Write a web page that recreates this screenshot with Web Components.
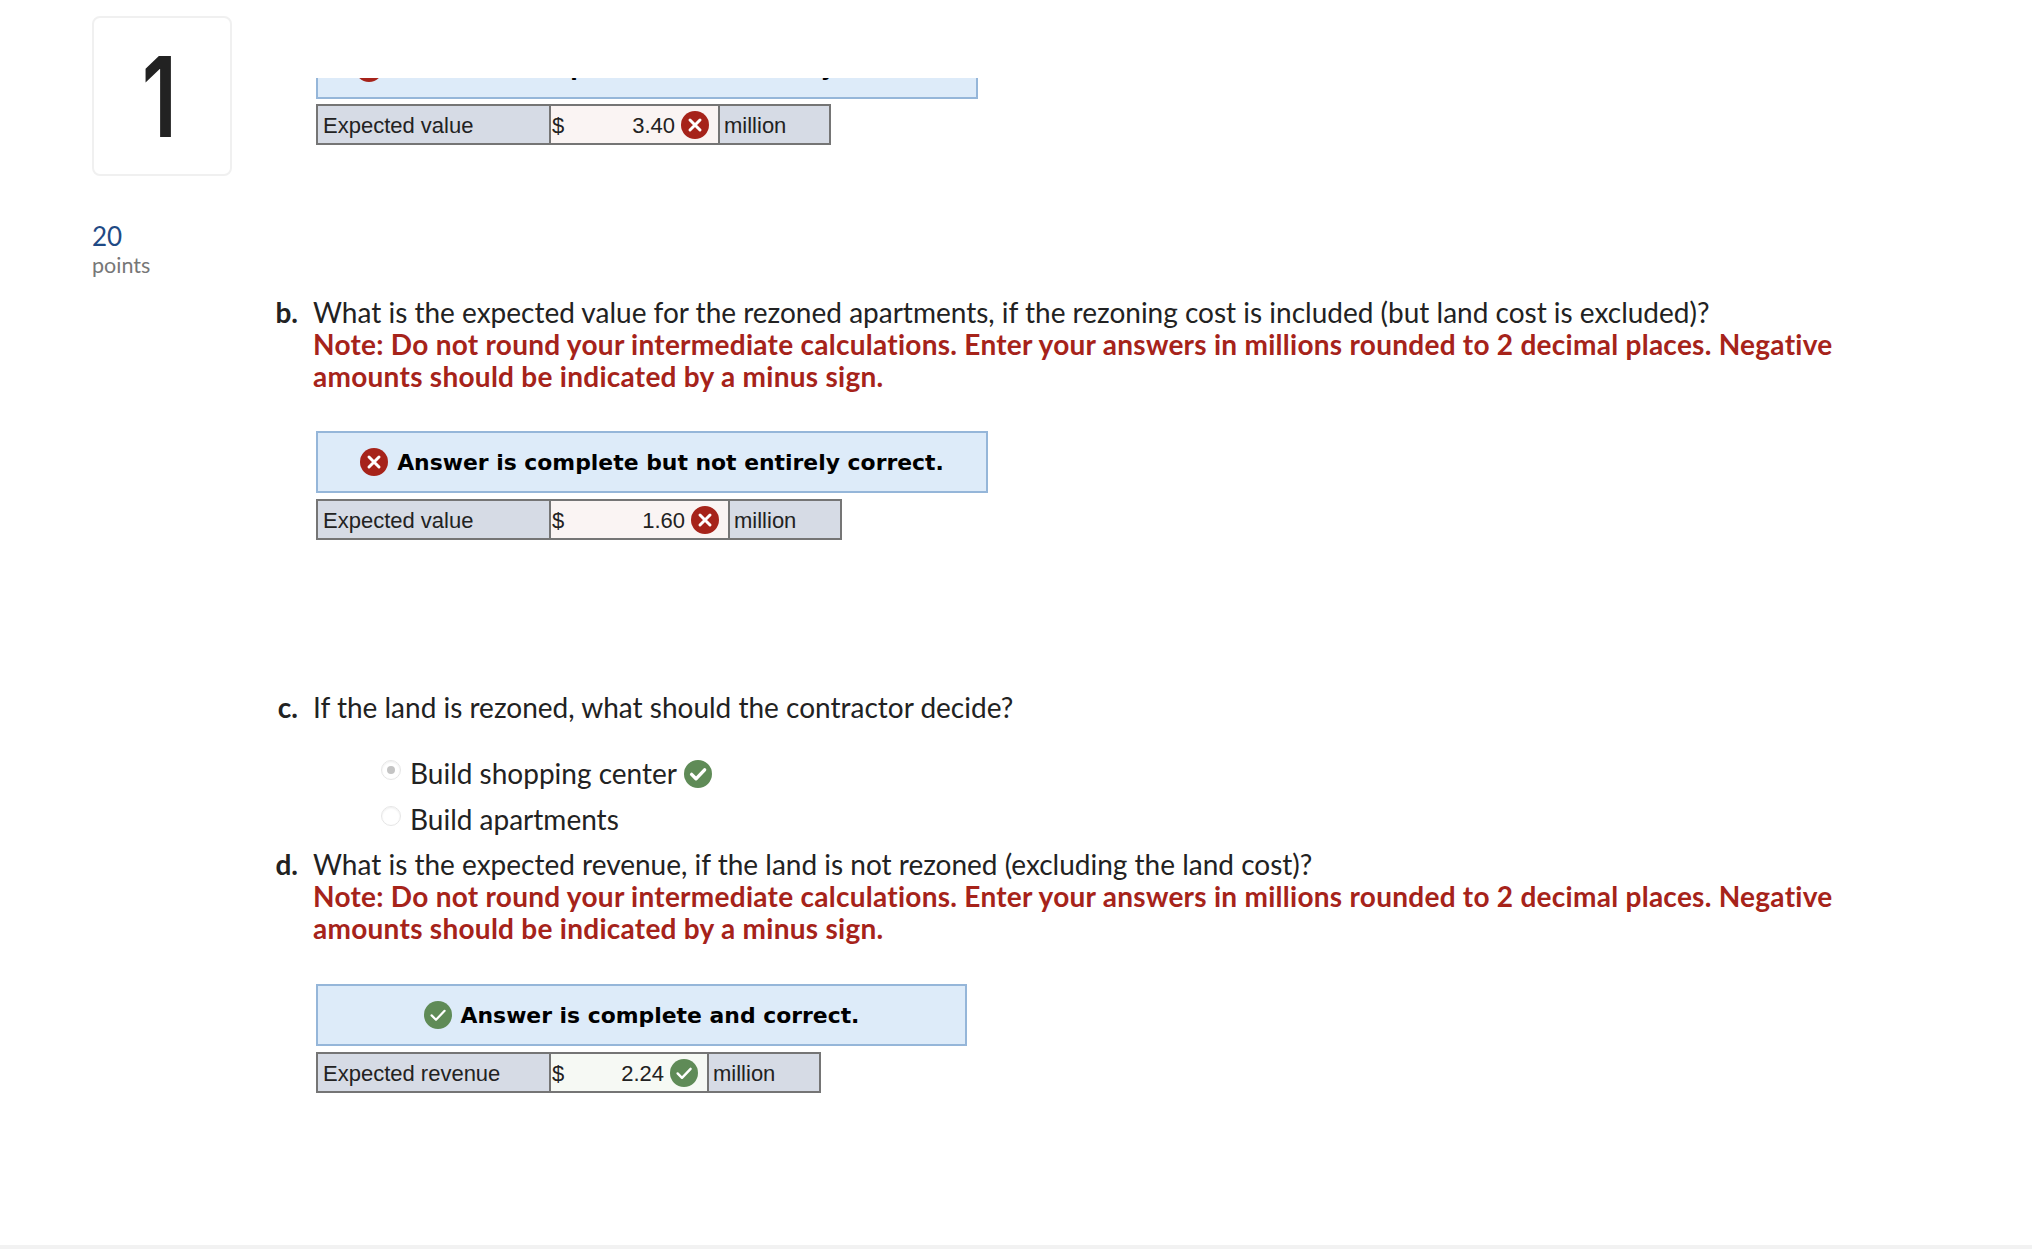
<!DOCTYPE html>
<html>
<head>
<meta charset="utf-8">
<title>Question 1</title>
<style>
    html, body { margin: 0; background: #fff; }
    body { font-family: "Lato", "Open Sans", sans-serif; color: #222; }
</style>
</head>
<body>
<quiz-page>
    <question-side slot="side" number="1" points="20"></question-side>

    <answer-banner status="wrong" width="662">Answer is complete but not entirely correct.</answer-banner>
    <answer-table label="Expected value" value="3.40" status="wrong" cols="231,171,109"></answer-table>

    <question-part letter="b." style="margin-top:151px">
        What is the expected value for the rezoned apartments, if the rezoning cost is included (but land cost is excluded)?
        <span slot="note">Note: Do not round your intermediate calculations. Enter your answers in millions rounded to 2 decimal places. Negative amounts should be indicated by a minus sign.</span>
    </question-part>
    <answer-banner status="wrong" width="672" style="margin-top:39px">Answer is complete but not entirely correct.</answer-banner>
    <answer-table label="Expected value" value="1.60" status="wrong" cols="231,181,110" style="margin-top:6px"></answer-table>

    <question-part letter="c." style="margin-top:151px">
        If the land is rezoned, what should the contractor decide?
    </question-part>
    <radio-option checked status="right" style="margin-top:34px">Build shopping center</radio-option>
    <radio-option style="margin-top:14px">Build apartments</radio-option>

    <question-part letter="d." style="margin-top:13px">
        What is the expected revenue, if the land is not rezoned (excluding the land cost)?
        <span slot="note">Note: Do not round your intermediate calculations. Enter your answers in millions rounded to 2 decimal places. Negative amounts should be indicated by a minus sign.</span>
    </question-part>
    <answer-banner status="right" width="651" style="margin-top:40px">Answer is complete and correct.</answer-banner>
    <answer-table label="Expected revenue" value="2.24" status="right" cols="231,160,110" style="margin-top:6px"></answer-table>
</quiz-page>

<script>
class StatusIcon extends HTMLElement {
    constructor() {
        super();
        this.attachShadow({ mode: 'open' });
    }

    connectedCallback() {
        const status = this.getAttribute('status');
        const fill = status === 'right' ? '#5f8b57' : '#a6231a';
        const mark = status === 'right'
            ? `<path d="M7.6 14.4l4.4 4.4 8.6-9" fill="none" stroke="#fff" stroke-width="${this.getAttribute('weight') || 2.4}" stroke-linecap="round" stroke-linejoin="round"/>`
            : `<path d="M9 9l10 10M19 9L9 19" fill="none" stroke="#fff" stroke-width="3" stroke-linecap="round"/>`;
        this.shadowRoot.innerHTML = `
<style>
    :host { display: inline-block; width: 28px; height: 28px; flex: none; }
    svg { display: block; }
</style>
<svg width="28" height="28" viewBox="0 0 28 28"><circle cx="14" cy="14" r="14" fill="${fill}"/>${mark}</svg>`;
    }
}

class QuestionSide extends HTMLElement {
    constructor() {
        super();
        this.attachShadow({ mode: 'open' });
    }

    connectedCallback() {
        this.shadowRoot.innerHTML = `
<style>
    :host { display: block; padding: 16px 0 0 92px; font-family: "Lato", sans-serif; }
    .card {
        box-sizing: border-box;
        width: 140px;
        height: 160px;
        border: 2px solid #f0f0f0;
        border-radius: 8px;
        display: flex;
        align-items: center;
        justify-content: center;
        padding-right: 6px;
        font: 600 111px/1 "Inter", sans-serif;
        color: #222;
    }
    .card span { display: block; transform: scaleX(0.75); }
    .points { margin-top: 44px; font-size: 26px; line-height: 32px; color: #1f4a85; }
    .label { font-size: 21.5px; line-height: 26px; color: #777; }
</style>
<div class="card"><span>${this.getAttribute('number')}</span></div>
<div class="points">${this.getAttribute('points')}</div>
<div class="label">points</div>`;
    }
}

class AnswerBanner extends HTMLElement {
    constructor() {
        super();
        this.attachShadow({ mode: 'open' });
    }

    connectedCallback() {
        this.shadowRoot.innerHTML = `
<style>
    :host {
        display: flex;
        box-sizing: border-box;
        width: ${this.getAttribute('width')}px;
        height: 62px;
        margin-left: 46px;
        align-items: center;
        justify-content: center;
        gap: 9px;
        background: #ddebf9;
        border: 2px solid #95b6d9;
        font: bold 21.9px "DejaVu Sans", sans-serif;
        color: #000;
    }
</style>
<status-icon status="${this.getAttribute('status')}" weight="2.2"></status-icon>
<slot></slot>`;
    }
}

class AnswerTable extends HTMLElement {
    constructor() {
        super();
        this.attachShadow({ mode: 'open' });
    }

    connectedCallback() {
        const cols = this.getAttribute('cols').split(',');
        const status = this.getAttribute('status');
        this.shadowRoot.innerHTML = `
<style>
    :host {
        display: grid;
        grid-template-columns: ${cols.map(c => c + 'px').join(' ')};
        width: max-content;
        height: 41px;
        box-sizing: border-box;
        margin: 5px 0 0 46px;
        border: 2px solid #757575;
        font: 22px "Liberation Sans", Arial, sans-serif;
        color: #222;
    }
    div { display: flex; align-items: center; box-sizing: border-box; min-width: 0; }
    .label, .unit { background: #d6dbe5; padding: 2px 0 0 5px; }
    .unit { padding-left: 4px; }
    .input {
        background: ${status === 'right' ? '#f6f9f4' : '#faf4f3'};
        border-left: 2px solid #757575;
        border-right: 2px solid #757575;
        padding: 0 9px 0 1px;
    }
    .input span { padding-top: 2px; }
    .num { margin-left: auto; margin-right: 6px; }
</style>
<div class="label">${this.getAttribute('label')}</div>
<div class="input"><span>$</span><span class="num">${this.getAttribute('value')}</span><status-icon status="${status}"></status-icon></div>
<div class="unit">million</div>`;
    }
}

class QuestionPart extends HTMLElement {
    constructor() {
        super();
        this.attachShadow({ mode: 'open' });
    }

    connectedCallback() {
        this.shadowRoot.innerHTML = `
<style>
    :host {
        display: grid;
        grid-template-columns: 43px 1560px;
        font: 28px/32px "Lato", sans-serif;
        font-variant-ligatures: none;
        color: #222;
    }
    .letter { font-weight: 700; text-align: right; padding-right: 15px; }
    .note { display: block; color: #a6231a; font-weight: 700; letter-spacing: 0.27px; }
</style>
<div class="letter">${this.getAttribute('letter')}</div>
<div><slot></slot><slot class="note" name="note"></slot></div>`;
    }
}

class RadioOption extends HTMLElement {
    constructor() {
        super();
        this.attachShadow({ mode: 'open' });
    }

    connectedCallback() {
        const status = this.getAttribute('status');
        this.shadowRoot.innerHTML = `
<style>
    :host {
        display: flex;
        align-items: center;
        height: 32px;
        margin-left: 111px;
        gap: 7px;
        font: 28px/32px "Lato", sans-serif;
        font-variant-ligatures: none;
        color: #222;
    }
    .dot {
        box-sizing: border-box;
        width: 20px;
        height: 20px;
        margin: -6px 2px 0 0;
        border-radius: 50%;
        border: 1px solid #e6e6e6;
        box-shadow: inset 0 1px 2px #eee;
        display: flex;
        align-items: center;
        justify-content: center;
    }
    .dot i { width: 8px; height: 8px; border-radius: 50%; background: #c4c4c4; }
    status-icon { margin-top: 2px; }
</style>
<span class="dot">${this.hasAttribute('checked') ? '<i></i>' : ''}</span>
<span><slot></slot></span>
${status ? `<status-icon status="${status}" weight="3.4"></status-icon>` : ''}`;
    }
}

class QuizPage extends HTMLElement {
    constructor() {
        super();
        this.attachShadow({ mode: 'open' });
        this.shadowRoot.innerHTML = `
<style>
    :host { display: block; height: 1254px; overflow: hidden; background: #fff; }
    .layout { display: flex; height: 1245px; }
    .side { width: 270px; flex: none; }
    .view { flex: 1; margin-top: 78px; overflow: hidden; }
    .content { margin-top: -41px; }
    .footer { height: 4px; background: #f2f2f2; }
</style>
<div class="layout">
    <div class="side"><slot name="side"></slot></div>
    <div class="view"><div class="content"><slot></slot></div></div>
</div>
<div class="footer"></div>`;
    }
}

customElements.define('status-icon', StatusIcon);
customElements.define('question-side', QuestionSide);
customElements.define('answer-banner', AnswerBanner);
customElements.define('answer-table', AnswerTable);
customElements.define('question-part', QuestionPart);
customElements.define('radio-option', RadioOption);
customElements.define('quiz-page', QuizPage);
</script>
</body>
</html>
